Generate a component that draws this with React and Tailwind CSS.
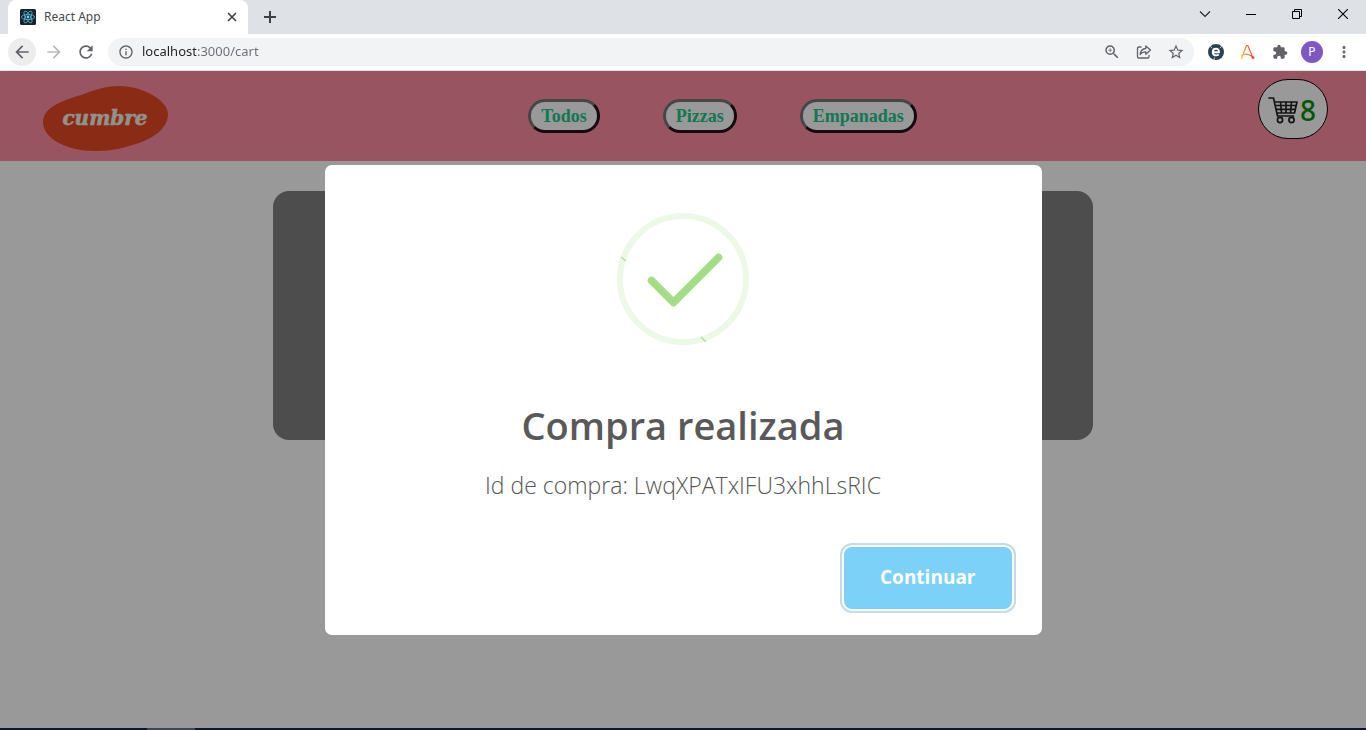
import {
  MdArrowBack,
  MdArrowForward,
  MdRefresh,
  MdInfoOutline,
  MdZoomIn,
  MdStarBorder,
  MdExtension,
  MdMoreVert,
} from "react-icons/md";

const toolButton = "flex size-7 shrink-0 items-center justify-center rounded-full text-[#5f6368]";
const windowButton = "flex h-7 w-[46px] items-center justify-center";

function ReactFavicon() {
  return (
    <svg viewBox="0 0 16 16" className="size-4 shrink-0" aria-hidden="true">
      <rect width="16" height="16" rx="1.5" fill="#1b2229" />
      <g fill="none" stroke="#4fb9d6" strokeWidth="0.8">
        <ellipse cx="8" cy="8" rx="6.6" ry="2.6" />
        <ellipse cx="8" cy="8" rx="6.6" ry="2.6" transform="rotate(60 8 8)" />
        <ellipse cx="8" cy="8" rx="6.6" ry="2.6" transform="rotate(120 8 8)" />
      </g>
      <circle cx="8" cy="8" r="1.4" fill="#61dafb" />
    </svg>
  );
}

function TabStrip() {
  return (
    <div className="flex h-[34px] justify-between bg-[#dee1e6] pl-2">
      <div className="flex">
        <div className="flex h-[34px] w-60 items-center gap-2 rounded-t-lg bg-white pr-2 pl-3">
          <ReactFavicon />
          <span className="flex-1 text-xs text-[#45494d]">React App</span>
          <button type="button" aria-label="Cerrar pestaña" className="flex size-4 items-center justify-center text-[#3c4043]">
            <svg viewBox="0 0 16 16" className="size-4" fill="none" stroke="currentColor" strokeWidth="1.6">
              <path d="M4 4l8 8M12 4l-8 8" />
            </svg>
          </button>
        </div>
        <button type="button" aria-label="Nueva pestaña" className="ml-2 flex size-7 items-center justify-center self-center text-[#3c4043]">
          <svg viewBox="0 0 16 16" className="size-4" fill="none" stroke="currentColor" strokeWidth="2">
            <path d="M8 2v12M2 8h12" />
          </svg>
        </button>
      </div>
      <div className="flex">
        <button type="button" aria-label="Buscar pestañas" className={windowButton}>
          <svg viewBox="0 0 12 12" className="size-3" fill="none" stroke="#222" strokeWidth="1.1">
            <path d="M1 3.5 6 8.500 11 3.500" />
          </svg>
        </button>
        <button type="button" aria-label="Minimizar" className={windowButton}>
          <svg viewBox="0 0 10 10" className="size-2.5" fill="none" stroke="#000">
            <path d="M0 5.5h10" />
          </svg>
        </button>
        <button type="button" aria-label="Restaurar" className={windowButton}>
          <svg viewBox="0 0 10 10" className="size-2.5" fill="none" stroke="#000">
            <path d="M0.5 2.5h7v7h-7zM2.5 2.5v-2h7v7h-2" />
          </svg>
        </button>
        <button type="button" aria-label="Cerrar" className={windowButton}>
          <svg viewBox="0 0 10 10" className="size-2.5" fill="none" stroke="#000" strokeWidth="1.1">
            <path d="M0 0 10 10M10 0 0 10" />
          </svg>
        </button>
      </div>
    </div>
  );
}

function Toolbar() {
  return (
    <div className="flex h-[37px] items-center gap-1 border-b border-[#e3e0e2] bg-white px-2">
      <button type="button" aria-label="Atrás" className={`${toolButton} bg-[#ededee]`}>
        <MdArrowBack className="size-5" />
      </button>
      <button type="button" aria-label="Adelante" className={toolButton}>
        <MdArrowForward className="size-5 text-[#bababa]" />
      </button>
      <button type="button" aria-label="Recargar" className={toolButton}>
        <MdRefresh className="size-5" />
      </button>
      <div className="mx-1 flex h-7 flex-1 items-center gap-1 rounded-full bg-[#f1f3f4] pr-1 pl-2.5">
        <MdInfoOutline className="mr-1 size-4 text-[#5f6368]" />
        <input
          type="text"
          aria-label="Dirección"
          defaultValue="localhost:3000/cart"
          className="min-w-0 flex-1 bg-linear-to-r from-[#202124] from-[54px] to-[#6a6e73] to-[54px] bg-clip-text text-[13px] text-transparent outline-none"
        />
        <button type="button" aria-label="Zoom" className={toolButton}>
          <MdZoomIn className="size-[18px]" />
        </button>
        <button type="button" aria-label="Compartir" className={toolButton}>
          <svg viewBox="0 0 16 16" className="size-4" fill="none" stroke="currentColor" strokeWidth="1.3" strokeLinejoin="round">
            <path d="M5.500 3H2.800C2 3 1.500 3.500 1.500 4.300v8.400c0 .8.500 1.300 1.300 1.300h8.900c.8 0 1.300-.5 1.300-1.300V11" />
            <path d="M9.800 2v2.500C6.500 4.700 4.600 6.700 4.200 10.500 5.500 8.600 7.200 7.800 9.800 7.800v2.500L14.500 6.100z" />
          </svg>
        </button>
        <button type="button" aria-label="Favorito" className={toolButton}>
          <MdStarBorder className="size-[18px]" />
        </button>
      </div>
      <button type="button" aria-label="Extensión E" className={toolButton}>
        <svg viewBox="0 0 16 16" className="size-4" fill="none">
          <circle cx="8" cy="8" r="8" fill="#2b4252" />
          <path d="M2.200 2.200l2 2M13.800 2.200l-2 2M6.500 13.500 6 16" stroke="#fff" strokeWidth="0.700" />
          <path d="M4.800 8.300h6.200c.1-2.200-1.100-3.500-3-3.500S4.800 6.200 4.800 8.200s1.300 3.200 3.300 3.200c1.100 0 2-.3 2.700-.9" stroke="#fff" strokeWidth="1.900" />
        </svg>
      </button>
      <button type="button" aria-label="Extensión A" className={toolButton}>
        <svg viewBox="0 0 16 16" className="size-4" fill="none">
          <defs>
            <linearGradient id="letterGradient" x1="0" y1="1" x2="1" y2="0.6">
              <stop offset="0" stopColor="#fbc531" />
              <stop offset="1" stopColor="#e8503f" />
            </linearGradient>
          </defs>
          <path
            d="M1.500 14.500 6.500 1.500h1.300l4.700 11.200M1.500 11.500c3-2 6.500-2.200 10.500 1"
            stroke="url(#letterGradient)"
            strokeWidth="1.200"
            strokeLinecap="round"
            strokeLinejoin="round"
          />
          <circle cx="13" cy="13.500" r="1.500" fill="#e8503f" />
        </svg>
      </button>
      <button type="button" aria-label="Extensiones" className={toolButton}>
        <MdExtension className="size-4" />
      </button>
      <button type="button" aria-label="Perfil" className={toolButton}>
        <span className="flex size-[22px] items-center justify-center rounded-full bg-[#7e57c2] text-xs text-white">P</span>
      </button>
      <button type="button" aria-label="Menú" className={toolButton}>
        <MdMoreVert className="size-[18px]" />
      </button>
    </div>
  );
}

function Logo() {
  return (
    <a href="#inicio" aria-label="cumbre" className="w-[146px] pt-1.5">
      <svg viewBox="0 0 128 68" className="h-[68px] w-32" aria-hidden="true">
        <path
          d="M40 10C53 5 64 1 78 1c25 0 49 15 49 28 0 13-12 23-29 29-15 5-27 8-43 8-31 0-53-13-53-29C2 25 15 17 40 10z"
          fill="#e64826"
        />
        <text
          x="64"
          y="40"
          textAnchor="middle"
          fill="#f4f4ea"
          stroke="#f4f4ea"
          strokeWidth="0.500"
          fontFamily="'DejaVu Serif', serif"
          fontSize="20"
          fontWeight="700"
          fontStyle="italic"
        >
          cumbre
        </text>
      </svg>
    </a>
  );
}

function CategoryButton({ children }) {
  return (
    <button
      type="button"
      className="h-[34px] rounded-full border-3 border-t-[#767676] border-r-[#221318] border-b-[#221318] border-l-[#767676] bg-white px-2.5 font-['Liberation_Serif',serif] text-lg leading-6 font-bold text-[#22c58a]"
    >
      {children}
    </button>
  );
}

function CartButton() {
  return (
    <button
      type="button"
      aria-label="Carrito, 8 productos"
      className="mt-2 flex h-[60px] w-[70px] items-center justify-center gap-0.5 self-start rounded-[30px] border border-black bg-white pt-0.5 pr-0.5"
    >
      <svg viewBox="0 0 30 28" className="h-7 w-[30px]" fill="none" stroke="#222" strokeWidth="1.700" strokeLinejoin="round" strokeLinecap="round">
        <path d="M1 2h4.500L9.500 20H25.500M6.500 6h22.500L26.500 17H9M7.500 9.500h20.500M8.200 13.300h19M12.500 6l1 11M18 6V17M23.500 6 22.500 17" />
        <circle cx="12" cy="24" r="2.600" />
        <circle cx="23.500" cy="24" r="2.600" />
      </svg>
      <span className="text-[28px] leading-8 font-medium text-[#009000]">8</span>
    </button>
  );
}

function SuccessIcon() {
  return (
    <svg viewBox="0 0 132 132" className="size-[132px]" fill="none" role="img" aria-label="Éxito">
      <circle cx="66" cy="66" r="63" stroke="#edf8e7" strokeWidth="6" />
      <path d="M4 44l5 4M84 124l5 5" stroke="#b4e0a0" strokeWidth="1.500" />
      <path d="M34.500 67.500 56.500 89.500 101.500 44.500" stroke="#a5dc86" strokeWidth="7.500" strokeLinecap="round" strokeLinejoin="round" />
    </svg>
  );
}

function PurchaseDialog() {
  return (
    <div className="absolute inset-0 flex items-center justify-center bg-black/40 font-['Open_Sans',sans-serif]">
      <div
        role="dialog"
        aria-modal="true"
        aria-labelledby="dialog-title"
        className="flex w-full max-w-[717px] flex-col items-center rounded-[7px] bg-white pt-12"
      >
        <SuccessIcon />
        <h2 id="dialog-title" className="mt-[50px] text-[38px] leading-[60px] font-semibold text-[#595959]">
          Compra realizada
        </h2>
        <p className="mt-3 text-[23px] leading-9 font-light text-[#555555]">Id de compra: LwqXPATxIFU3xhhLsRIC</p>
        <div className="mt-11 mb-[26px] flex w-full justify-end pr-[30px]">
          <button
            type="button"
            className="h-[62px] rounded-lg bg-[#7cd1f9] px-9 text-[19px] font-bold text-white ring-2 ring-[#c5d9e7] ring-offset-2 ring-offset-white"
          >
            Continuar
          </button>
        </div>
      </div>
    </div>
  );
}

export default function App() {
  return (
    <div className="flex min-h-screen flex-col font-['Noto_Sans',sans-serif]">
      <TabStrip />
      <Toolbar />
      <div className="relative flex-1 bg-white">
        <header className="flex h-[90px] items-center justify-between bg-[#fd8ea2] pr-[38px] pl-[41px]">
          <Logo />
          <nav className="flex gap-[63px]">
            <CategoryButton>Todos</CategoryButton>
            <CategoryButton>Pizzas</CategoryButton>
            <CategoryButton>Empanadas</CategoryButton>
          </nav>
          <CartButton />
        </header>
        <main className="flex justify-center pt-[30px]">
          <section className="h-[249px] w-3/5 rounded-2xl bg-[#808080]" />
        </main>
        <PurchaseDialog />
      </div>
      <footer className="flex h-0.5 bg-[#0a1633] pl-[147px]">
        <div className="w-12 bg-[#3e4459]" />
      </footer>
    </div>
  );
}
